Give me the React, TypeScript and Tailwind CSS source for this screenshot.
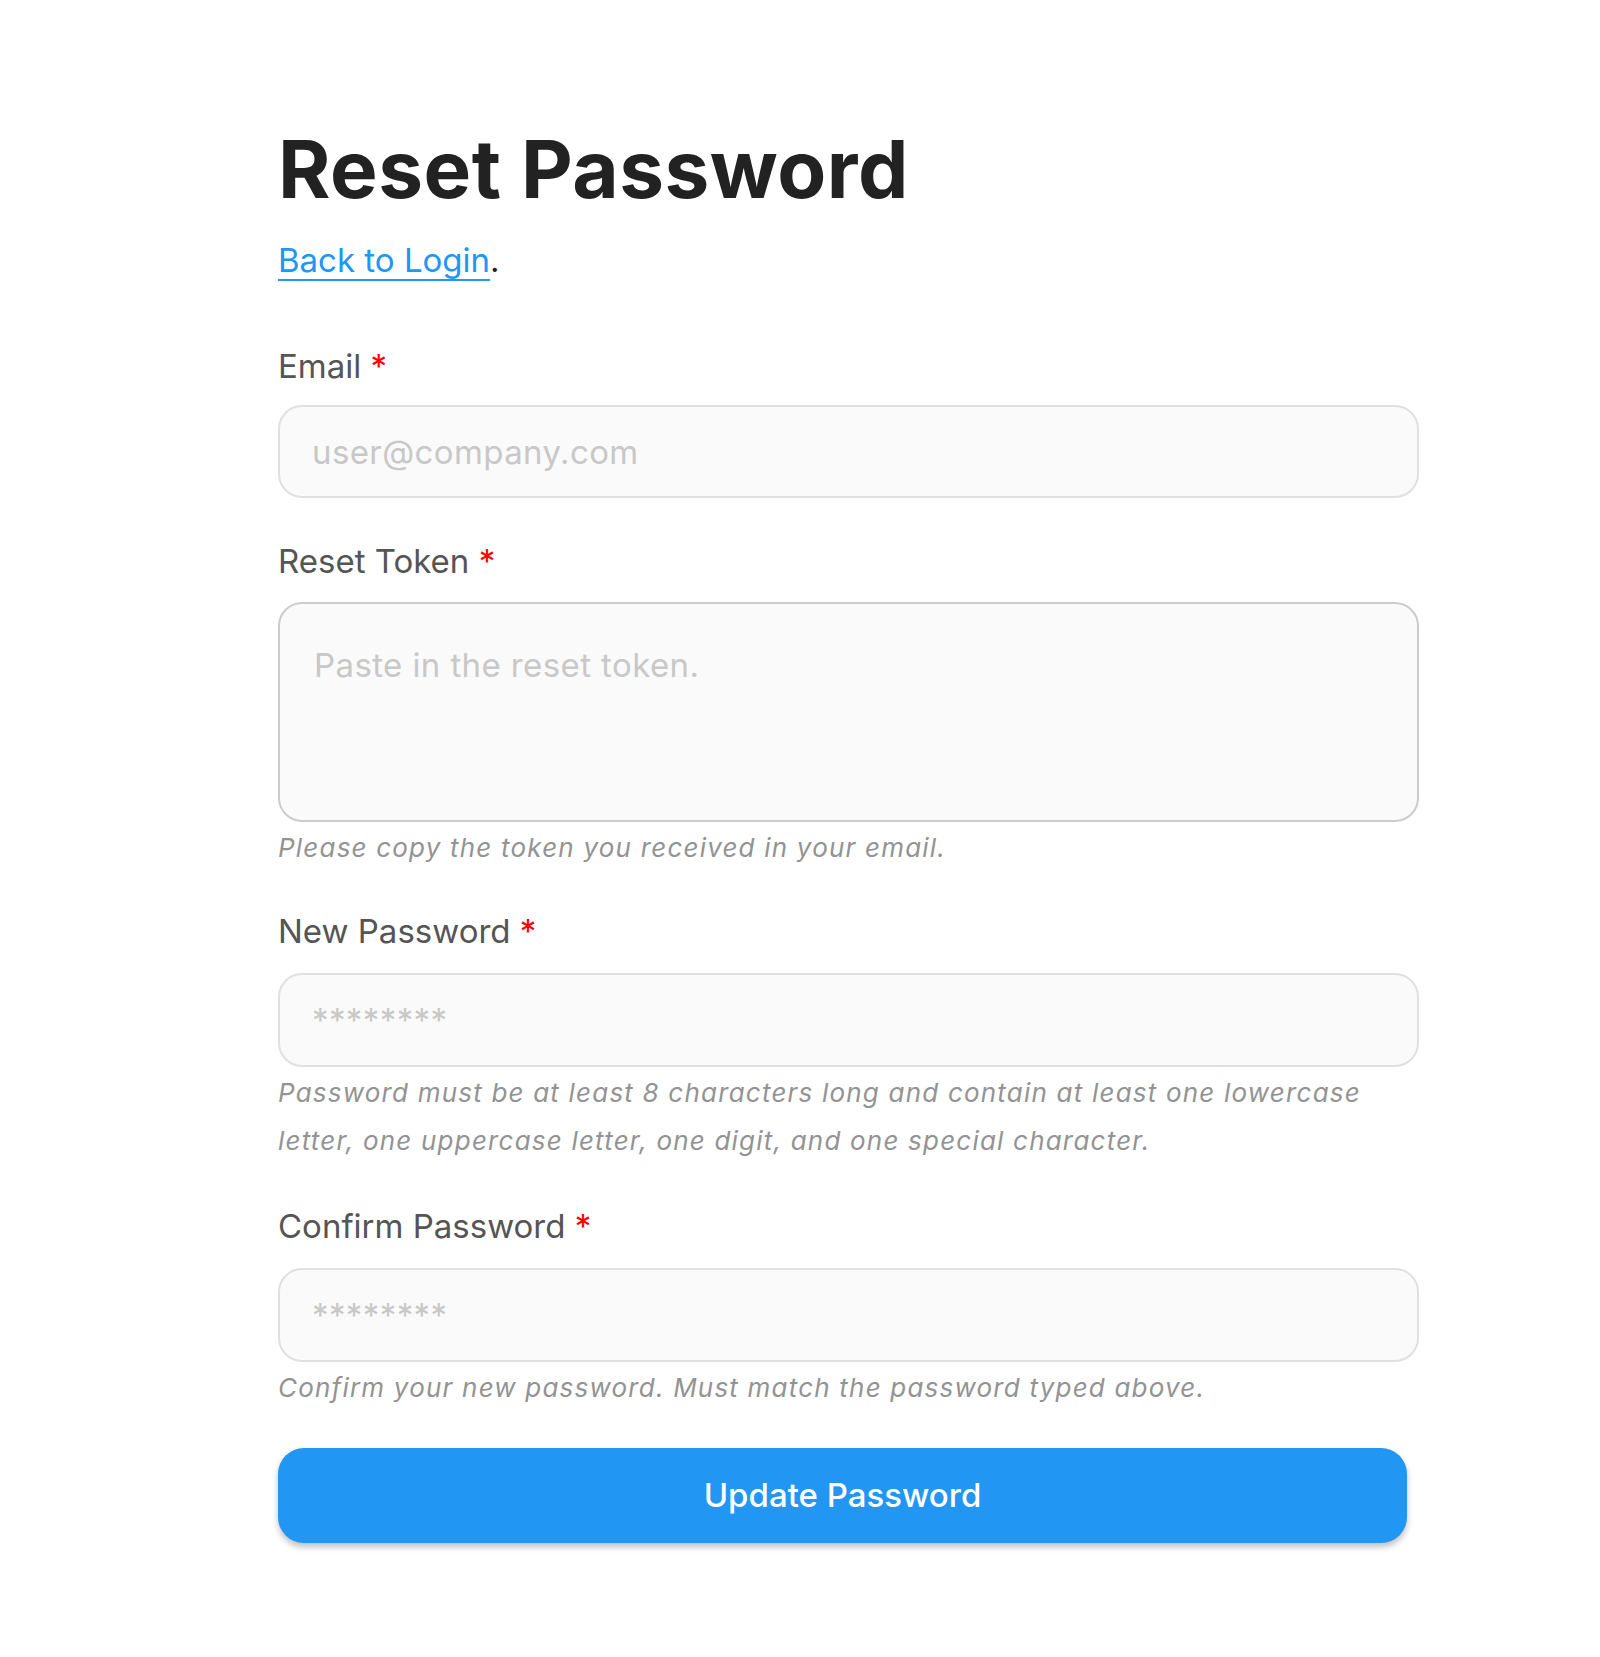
import React from "react";

function Label({ children }: { children: React.ReactNode }) {
  return (
    <label className="block text-[33px] leading-[40px] text-[#555555]">
      {children} <span className="text-[#ff0000]">*</span>
    </label>
  );
}

function Help({ children }: { children: React.ReactNode }) {
  return (
    <p className="mt-[2px] text-[26px] leading-[48px] italic tracking-[1.2px] text-[#939393]">
      {children}
    </p>
  );
}

const inputCls =
  "block w-[1141px] h-[94px] rounded-[24px] border-2 border-[#e0e0e0] bg-[#fafafa] px-[32px] text-[33px] tracking-[0.4px] text-[#333] outline-none placeholder:text-[#c8c8c8]";

export default function App() {
  return (
    <div className="min-h-[1657px] bg-white font-['Inter',sans-serif]">
      <div className="pl-[278px] pt-[121px]">
        <h1 className="text-[80px] leading-[96px] font-bold text-[#222222] tracking-[0.5px]">
          Reset Password
        </h1>
        <p className="mt-[23px] text-[33px] leading-[40px] text-[#222]">
          <a
            href="#"
            className="text-[#2196f3] underline decoration-2 underline-offset-[7px]"
          >
            Back to Login
          </a>
          .
        </p>

        <div className="mt-[66px]">
          <Label>Email</Label>
          <input
            type="email"
            placeholder="user@company.com"
            className={inputCls + " mt-[19px] !h-[93px]"}
          />
        </div>

        <div className="mt-[43px]">
          <Label>Reset Token</Label>
          <textarea
            placeholder="Paste in the reset token."
            className="mt-[21px] block w-[1141px] h-[220px] resize-none rounded-[24px] border-2 border-[#cccccc] bg-[#fafafa] px-[34px] pt-[41px] text-[33px] leading-[40px] tracking-[0.4px] text-[#333] outline-none placeholder:text-[#c8c8c8]"
          />
          <Help>Please copy the token you received in your email.</Help>
        </div>

        <div className="mt-[39px] w-[1141px]">
          <Label>New Password</Label>
          <input type="password" placeholder="********" className={inputCls + " mt-[22px]"} />
          <Help>
            Password must be at least 8 characters long and contain at least one lowercase
            letter, one uppercase letter, one digit, and one special character.
          </Help>
        </div>

        <div className="mt-[41px]">
          <Label>Confirm Password</Label>
          <input type="password" placeholder="********" className={inputCls + " mt-[22px]"} />
          <Help>Confirm your new password. Must match the password typed above.</Help>
        </div>

        <button
          type="button"
          className="mt-[36px] block w-[1129px] h-[95px] rounded-[26px] bg-[#2196f3] text-[33px] font-medium text-white shadow-[0_4px_6px_rgba(0,0,0,0.25)]"
        >
          Update Password
        </button>
      </div>
    </div>
  );
}
